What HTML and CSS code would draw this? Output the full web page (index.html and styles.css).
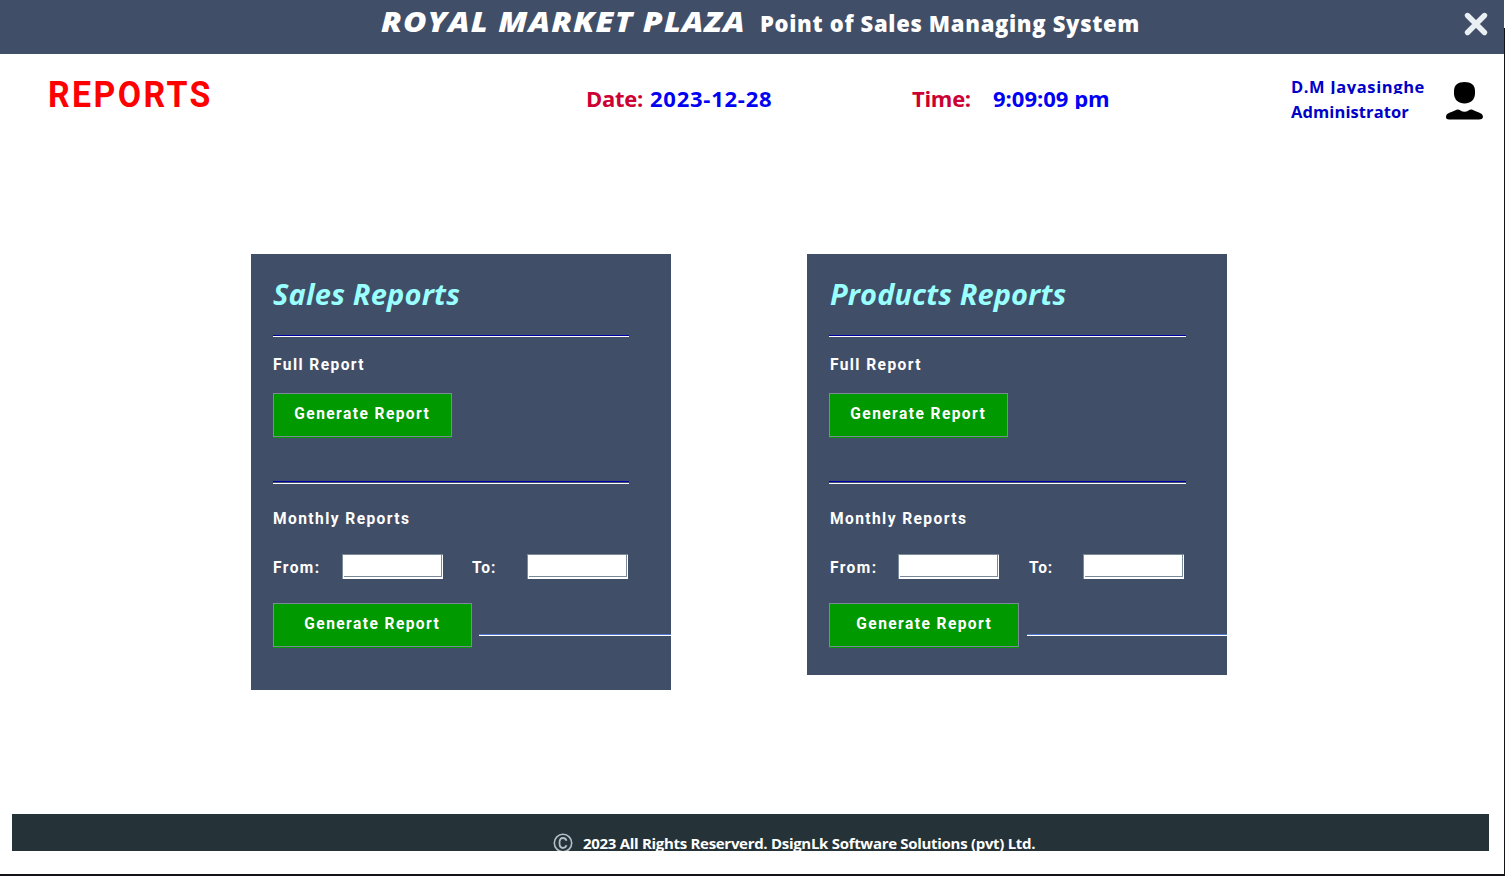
FILE: index.html
```html
<!DOCTYPE html>
<html lang="en">
<head>
<meta charset="utf-8">
<title>Royal Market Plaza - Reports</title>
<link rel="stylesheet" href="styles.css">
</head>
<body>
<div class="window">
  <header class="titlebar">
    <span class="brand">ROYAL MARKET PLAZA</span>
    <span class="tagline">Point of Sales Managing System</span>
    <svg class="close" width="28" height="28" viewBox="0 0 28 28"><path d="M5.500 4.500L22.500 21.500M22.500 4.500L5.500 21.500" stroke="#e9eff2" stroke-width="5.400" stroke-linecap="round"/></svg>
  </header>
  <section class="info">
    <h1 class="page-name">REPORTS</h1>
    <span class="label date-label">Date:</span>
    <span class="value date-value">2023-12-28</span>
    <span class="label time-label">Time:</span>
    <span class="value time-value">9:09:09 pm</span>
    <div class="user">
      <div class="user-name">D.M Jayasinghe</div>
      <div class="user-role">Administrator</div>
    </div>
    <svg class="avatar" width="38" height="40" viewBox="0 0 38 40"><path d="M19.500 1C26 1 30 4 30 10V13C29.500 19 25.500 22.500 19.500 22.500S9.500 19 9 13V10C9 4 13 1 19.500 1Z"/><path d="M1 36C1 32 5 32 10 29.500Q13 27.500 15.500 29.500Q19.500 32 23.500 29.500Q26 27.500 29 29.500C34 32 38 32 38 36Q37.500 38.500 34 38.500H4Q1 38.500 1 36Z"/></svg>
  </section>
  <main class="panels">
    <section class="panel sales">
      <h2>Sales Reports</h2>
      <div class="rule"></div>
      <div class="caption full">Full Report</div>
      <button class="generate"><span>Generate Report</span></button>
      <div class="rule wide"></div>
      <div class="caption monthly">Monthly Reports</div>
      <div class="range">
        <span class="caption from">From:</span><input class="field" type="text">
        <span class="caption to">To:</span><input class="field" type="text">
      </div>
      <div class="actions"><button class="generate"><span>Generate Report</span></button><div class="tail"></div></div>
    </section>
    <section class="panel products">
      <h2>Products Reports</h2>
      <div class="rule"></div>
      <div class="caption full">Full Report</div>
      <button class="generate"><span>Generate Report</span></button>
      <div class="rule wide"></div>
      <div class="caption monthly">Monthly Reports</div>
      <div class="range">
        <span class="caption from">From:</span><input class="field" type="text">
        <span class="caption to">To:</span><input class="field" type="text">
      </div>
      <div class="actions"><button class="generate"><span>Generate Report</span></button><div class="tail"></div></div>
    </section>
  </main>
  <footer class="footer">
    <svg class="copy" width="20" height="20" viewBox="0 0 20 20" fill="none" stroke="#b4c0c8"><circle cx="10" cy="10" r="8.700" stroke-width="1.600"/><path d="M13.500 7.700Q12.500 5 10 5Q6.500 5 6.500 10T10 15Q12.500 15 13.500 12.300" stroke-width="1.800"/></svg>
    <span class="rights">2023 All Rights Reserverd. DsignLk Software Solutions (pvt) Ltd.</span>
  </footer>
</div>
</body>
</html>
```
FILE: styles.css
```css
* { box-sizing: border-box; }
body { margin: 0; background: #fff; font-family: "Open Sans", "Noto Sans", sans-serif; }
h1, h2 { margin: 0; }
.window {
  width: 1505px; height: 876px; overflow: hidden;
  display: flex; flex-direction: column;
  border-bottom: 2px solid #161318;
  background: linear-gradient(#161318, #161318) 1504px 28px / 1px 848px no-repeat #fff;
  white-space: nowrap;
}
.titlebar {
  width: 1504px; height: 54px; flex: none; padding-left: 381px;
  display: flex; align-items: baseline;
  background: #414e67; color: #fff; line-height: 41px;
}
.brand { width: 379px; font-size: 29px; font-weight: 800; font-style: italic; letter-spacing: 1px; transform: scaleX(1.104); transform-origin: 0 0; }
.tagline { width: 702px; font-size: 22px; font-weight: 800; letter-spacing: 0.68px; }
.close { align-self: flex-start; margin-top: 11px; flex: none; }
.info {
  height: 200px; flex: none; padding: 16px 0 0 48px;
  display: flex; align-items: baseline;
}
.page-name { width: 538px; color: #f00; font: 700 37px/50px Roboto, sans-serif; letter-spacing: 2.6px; transform: scaleX(0.915); transform-origin: 0 0; }
.label, .value { font-size: 22px; font-weight: 700; line-height: 30px; }
.label { color: #cc0033; letter-spacing: -0.3px; }
.value { color: #0000f5; }
.date-label { width: 64px; }
.date-value { width: 262px; letter-spacing: 0.75px; }
.time-label { width: 81px; }
.time-value { width: 298px; clip-path: inset(0 0 4px 0); }
.user { align-self: flex-start; width: 154px; margin-top: 4px; color: #0000c8; font-size: 16.5px; font-weight: 700; line-height: 26px; }
.user-name { height: 20px; margin-bottom: 5px; overflow: hidden; letter-spacing: 0.6px; }
.user-role { letter-spacing: 0.1px; }
.avatar { align-self: flex-start; margin-top: 11px; flex: none; }
.panels { height: 560px; flex: none; padding-left: 251px; display: flex; align-items: flex-start; gap: 136px; }
.panel { width: 420px; padding: 20px 0 0 22px; background: #414e67; color: #fff; }
.sales { height: 436px; }
.products { height: 421px; }
.panel h2 { color: #99ffff; font-size: 29px; font-weight: 700; font-style: italic; line-height: 40px; letter-spacing: 0.2px; }
.products h2 { padding-left: 1px; letter-spacing: 0.1px; }
.rule { width: 356px; height: 2px; margin-top: 21px; border-top: 1px solid #0000a8; border-bottom: 1px solid #fff; }
.rule.wide { height: 3px; margin-top: 44px; }
.products .rule { width: 357px; }
.caption { font: 700 17px/20px Roboto, sans-serif; letter-spacing: 1.55px; transform: scaleX(0.915); transform-origin: 0 0; }
.products .caption { padding-left: 1px; }
.full { margin-top: 17px; }
.monthly { margin-top: 24px; }
.generate {
  display: block; width: 179px; height: 44px; margin-top: 19px; padding: 0 0 4px;
  border: 1px solid #7a8a99; border-radius: 0; box-shadow: 0 1px #009900;
  background: #009900; color: #fff;
  font: 700 17px/20px Roboto, sans-serif;
}
.generate span { display: inline-block; letter-spacing: 1.55px; transform: scaleX(0.915); }
.range { display: flex; height: 25px; margin-top: 26px; align-items: flex-start; }
.range .caption { margin-top: 3px; }
.from { width: 69px; }
.to { width: 55px; margin-left: 29px; letter-spacing: 1px; }
.field {
  width: 101px; height: 25px; padding: 0; outline: none; border-radius: 0;
  border: 1px solid #7a8a99; border-width: 1px 0 0 1px;
  background:
    linear-gradient(#7a8a99, #7a8a99) 98px 0 / 1px 22px no-repeat,
    linear-gradient(#7a8a99, #7a8a99) 1px 21px / 98px 1px no-repeat, #fff;
}
.actions { display: flex; align-items: flex-start; margin-top: 24px; }
.actions .generate { margin: 0; width: 199px; }
.products .actions .generate { width: 190px; }
.tail { flex: 1; height: 2px; margin: 31px 0 0 7px; border-top: 1px solid #5078d0; border-bottom: 1px solid #fff; }
.products .tail { margin-left: 8px; }
.footer {
  width: 1477px; height: 37px; flex: none; margin-left: 12px; padding: 17px 0 0 541px; overflow: hidden;
  display: flex; align-items: flex-start; gap: 10px;
  background: #253238; color: #fff;
}
.copy { flex: none; margin-top: 2px; }
.rights { font-size: 15px; font-weight: 700; line-height: 25px; letter-spacing: -0.3px; }
```
